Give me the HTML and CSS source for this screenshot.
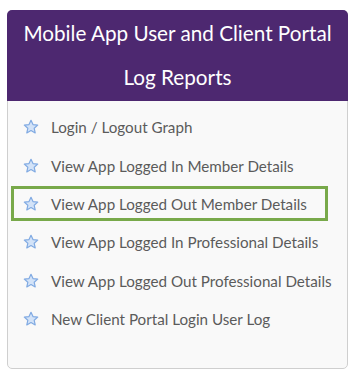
FILE: index.html
```html
<!DOCTYPE html>
<html lang="en">
<head>
    <meta charset="UTF-8">
    <meta name="viewport" content="width=device-width, initial-scale=1.0">
    <title>Log Reports</title>
    <link rel="stylesheet" href="styles.css">
</head>
<body>
    <div class="panel">
        <h2 class="panel-title">Mobile App User and Client Portal Log Reports</h2>
        <ul class="report-list">
            <li><a href="#"><svg class="star" viewBox="0 0 16 16"><path d="M8 1.3l2 4.3 4.7.5-3.5 3.2 1 4.6L8 11.5l-4.2 2.4 1-4.6-3.5-3.2 4.7-.5z"/></svg>Login / Logout Graph</a></li>
            <li><a href="#"><svg class="star" viewBox="0 0 16 16"><path d="M8 1.3l2 4.3 4.7.5-3.5 3.2 1 4.6L8 11.5l-4.2 2.4 1-4.6-3.5-3.2 4.7-.5z"/></svg>View App Logged In Member Details</a></li>
            <li class="active"><a href="#"><svg class="star" viewBox="0 0 16 16"><path d="M8 1.3l2 4.3 4.7.5-3.5 3.2 1 4.6L8 11.5l-4.2 2.4 1-4.6-3.5-3.2 4.7-.5z"/></svg>View App Logged Out Member Details</a></li>
            <li><a href="#"><svg class="star" viewBox="0 0 16 16"><path d="M8 1.3l2 4.3 4.7.5-3.5 3.2 1 4.6L8 11.5l-4.2 2.4 1-4.6-3.5-3.2 4.7-.5z"/></svg>View App Logged In Professional Details</a></li>
            <li><a href="#"><svg class="star" viewBox="0 0 16 16"><path d="M8 1.3l2 4.3 4.7.5-3.5 3.2 1 4.6L8 11.5l-4.2 2.4 1-4.6-3.5-3.2 4.7-.5z"/></svg>View App Logged Out Professional Details</a></li>
            <li><a href="#"><svg class="star" viewBox="0 0 16 16"><path d="M8 1.3l2 4.3 4.7.5-3.5 3.2 1 4.6L8 11.5l-4.2 2.4 1-4.6-3.5-3.2 4.7-.5z"/></svg>New Client Portal Login User Log</a></li>
        </ul>
    </div>
</body>
</html>
```

FILE: styles.css
```css
* {
    box-sizing: border-box;
    padding: 0;
    margin: 0;
}
body {
    background: #fff;
    padding: 10px 10px 0 7px;
    font-family: Lato, 'Noto Sans', sans-serif;
}
.panel {
    width: 341px;
    height: 359px;
    background: #f9f9f9;
    border: 1px solid #cfcfcf;
    border-radius: 5px;
}
.panel-title {
    margin: -1px -1px 0;
    padding: 1px 6px 0;
    height: 91px;
    background: #4d2870;
    border-radius: 5px 5px 0 0;
    color: #fff;
    font-size: 20.7px;
    font-weight: 400;
    line-height: 44px;
    text-align: center;
}
.report-list {
    list-style: none;
    padding-top: 7px;
}
.report-list li {
    height: 38.4px;
    display: flex;
    align-items: center;
}
.report-list a {
    display: flex;
    align-items: center;
    width: 317px;
    height: 35px;
    margin-left: 3px;
    padding-left: 9px;
    border: 3px solid transparent;
    color: #5b5b5b;
    font-size: 15.2px;
    white-space: nowrap;
    text-decoration: none;
}
.report-list .active a {
    border-color: #78a94a;
}
.star {
    flex: none;
    width: 16px;
    height: 16px;
    margin-right: 12px;
    fill: #d3e3f8;
    stroke: #80aae2;
    stroke-width: 1.2;
    stroke-linejoin: round;
}
```
